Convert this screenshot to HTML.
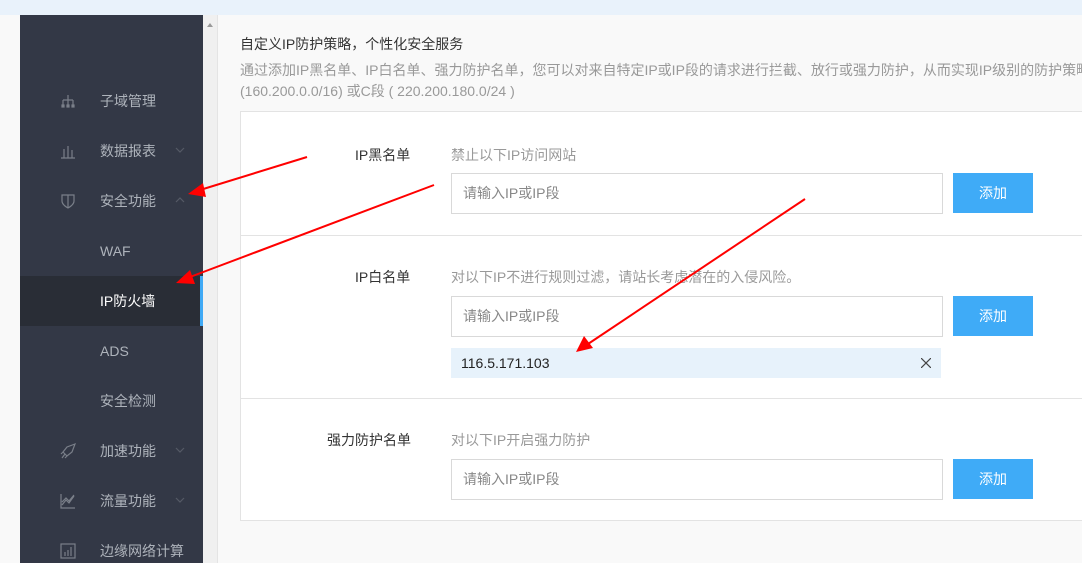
<!DOCTYPE html>
<html><head><meta charset="utf-8"><style>
*{margin:0;padding:0;box-sizing:border-box}
html,body{width:1082px;height:563px;overflow:hidden}
body{background:#f9f9f9;position:relative;font-family:"Liberation Sans","Noto Sans CJK SC",sans-serif;}
.top{position:absolute;left:0;top:0;width:1082px;height:15px;background:#e9f2fb}
.lw{position:absolute;left:0;top:15px;width:20px;height:548px;background:#f9f9f9}
.side{position:absolute;left:20px;top:15px;width:183px;height:548px;background:#333846}
.scroll{position:absolute;left:203px;top:15px;width:15px;height:548px;background:#f0f0f0;border-right:1px solid #e4e4e4}
.scroll:before{content:"";position:absolute;left:4px;top:8px;border:3px solid transparent;border-bottom:4px solid #999;border-top:0}
.item{position:absolute;left:20px;width:183px;height:50px;line-height:50px;color:#aeb3bb;font-size:14px}
.item span{position:absolute;left:80px}
.item.act{background:#292d36;color:#fff}
.item.act:after{content:"";position:absolute;right:0;top:0;width:3px;height:50px;background:#3fa9f5}
.ic{position:absolute;left:40px;top:17px;width:16px;height:16px}
.chev{position:absolute;left:155px;top:20px;width:10px;height:8px}
.h1{position:absolute;left:240px;top:34px;font-size:14px;color:#333}
.desc{position:absolute;left:240px;top:60px;font-size:14px;color:#999;line-height:21px;white-space:nowrap}
.card{position:absolute;left:240px;top:111px;width:860px;height:410px;background:#fff;border:1px solid #e3e3e3}
.div{position:absolute;left:241px;width:841px;height:1px;background:#e3e3e3}
.lab{position:absolute;font-size:14px;color:#333}
.hint{position:absolute;left:451px;font-size:14px;color:#999}
.inp{position:absolute;left:451px;width:492px;height:41px;border:1px solid #d9d9d9;font-size:14px;color:#888;line-height:39px;padding-left:11px;background:#fff}
.btn{position:absolute;left:953px;width:80px;height:40px;background:#3fabf7;color:#fff;font-size:14px;text-align:center;line-height:40px}
.tag{position:absolute;left:451px;top:348px;width:490px;height:30px;background:#e7f2fb;font-size:14px;color:#222;line-height:31px;padding-left:10px}
.tag svg{position:absolute;right:10px;top:10px}
</style></head><body>
<div class="top"></div><div class="lw"></div><div class="side"></div><div class="scroll"></div>

<div class="item" style="top:76px"><svg class="ic" viewBox="0 0 16 16" fill="none" stroke="#7a7f89" stroke-width="1.2"><path d="M8 2v5M3 7h10M3 7v6M8 7v6M13 7v6"/><rect x="2" y="12" width="2" height="2" fill="#7a7f89"/><rect x="7" y="12" width="2" height="2" fill="#7a7f89"/><rect x="12" y="12" width="2" height="2" fill="#7a7f89"/></svg><span>子域管理</span></div>
<div class="item" style="top:126px"><svg class="ic" viewBox="0 0 16 16" fill="none" stroke="#7a7f89" stroke-width="1.2"><path d="M1 15h14M4 15V6M8 15V3M12 15V7"/></svg><span>数据报表</span><svg class="chev" viewBox="0 0 10 8" fill="none" stroke="#555a66" stroke-width="1.2"><path d="M1 2l4 4 4-4"/></svg></div>
<div class="item" style="top:176px"><svg class="ic" viewBox="0 0 16 16" fill="none" stroke="#7a7f89" stroke-width="1.2"><path d="M2 2h12v6c0 4-6 7-6 7s-6-3-6-7z M8 2v13"/></svg><span>安全功能</span><svg class="chev" viewBox="0 0 10 8" fill="none" stroke="#555a66" stroke-width="1.2"><path d="M1 6l4-4 4 4"/></svg></div>
<div class="item" style="top:226px"><span>WAF</span></div>
<div class="item act" style="top:276px"><span>IP防火墙</span></div>
<div class="item" style="top:326px"><span>ADS</span></div>
<div class="item" style="top:376px"><span>安全检测</span></div>
<div class="item" style="top:426px"><svg class="ic" viewBox="0 0 16 16" fill="none" stroke="#7a7f89" stroke-width="1.2"><path d="M15 1L7 4 3 9l4 4 5-4 3-8zM3 9l-2 2M7 13l-2 2M5 11l-3 4"/></svg><span>加速功能</span><svg class="chev" viewBox="0 0 10 8" fill="none" stroke="#555a66" stroke-width="1.2"><path d="M1 2l4 4 4-4"/></svg></div>
<div class="item" style="top:476px"><svg class="ic" viewBox="0 0 16 16" fill="none" stroke="#7a7f89" stroke-width="1.2"><path d="M1 1v14h14M2 12l4-5 3 3 5-7M2 9l4-4 3 3 5-6"/></svg><span>流量功能</span><svg class="chev" viewBox="0 0 10 8" fill="none" stroke="#555a66" stroke-width="1.2"><path d="M1 2l4 4 4-4"/></svg></div>
<div class="item" style="top:526px"><svg class="ic" viewBox="0 0 16 16" fill="none" stroke="#7a7f89" stroke-width="1.2"><rect x="1" y="1" width="14" height="14"/><path d="M5 13V9M8 13V7M11 13V4"/></svg><span>边缘网络计算</span></div>

<div class="h1">自定义IP防护策略，个性化安全服务</div>
<div class="desc">通过添加IP黑名单、IP白名单、强力防护名单，您可以对来自特定IP或IP段的请求进行拦截、放行或强力防护，从而实现IP级别的防护策略<br>(160.200.0.0/16) 或C段 ( 220.200.180.0/24 )</div>

<div class="card"></div>
<div class="div" style="top:235px"></div>
<div class="div" style="top:398px"></div>

<div class="lab" style="left:355px;top:145px">IP黑名单</div>
<div class="hint" style="top:145px">禁止以下IP访问网站</div>
<div class="inp" style="top:173px">请输入IP或IP段</div>
<div class="btn" style="top:173px">添加</div>

<div class="lab" style="left:355px;top:267px">IP白名单</div>
<div class="hint" style="top:267px">对以下IP不进行规则过滤，请站长考虑潜在的入侵风险。</div>
<div class="inp" style="top:296px">请输入IP或IP段</div>
<div class="btn" style="top:296px">添加</div>
<div class="tag">116.5.171.103<svg width="10" height="10" viewBox="0 0 10 10" stroke="#444" stroke-width="1.2"><path d="M0 0L10 10M10 0L0 10"/></svg></div>

<div class="lab" style="left:327px;top:430px">强力防护名单</div>
<div class="hint" style="top:430px">对以下IP开启强力防护</div>
<div class="inp" style="top:459px">请输入IP或IP段</div>
<div class="btn" style="top:459px">添加</div>

<svg style="position:absolute;left:0;top:0" width="1082" height="563">
<g stroke="#f00" stroke-width="2" fill="#f00">
<line x1="307" y1="157" x2="200" y2="190"/><polygon points="188,194 203,183 206,197" stroke="none"/>
<line x1="434" y1="185" x2="190" y2="277"/><polygon points="176,283 190,270 195,284" stroke="none"/>
<line x1="805" y1="199" x2="588" y2="344"/><polygon points="576,352 584,336 593,348" stroke="none"/>
</g></svg>
</body></html>
